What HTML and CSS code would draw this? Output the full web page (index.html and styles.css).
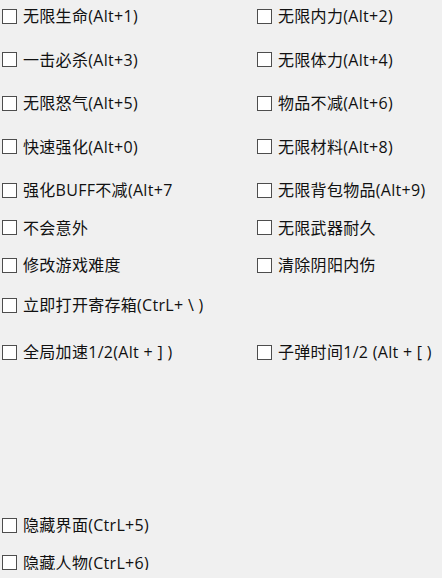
FILE: index.html
```html
<!DOCTYPE html>
<html lang="zh-CN">
<head>
    <meta charset="UTF-8">
    <meta name="viewport" content="width=device-width, initial-scale=1.0">
    <title>修改器</title>

    <link rel="stylesheet" href="styles.css">
</head>
<body>
    <form class="panel">
        <div class="row">
            <label class="option"><input type="checkbox"><span>无限生命(Alt+1)</span></label>
            <label class="option"><input type="checkbox"><span>无限内力(Alt+2)</span></label>
        </div>
        <div class="row">
            <label class="option"><input type="checkbox"><span>一击必杀(Alt+3)</span></label>
            <label class="option"><input type="checkbox"><span>无限体力(Alt+4)</span></label>
        </div>
        <div class="row">
            <label class="option"><input type="checkbox"><span>无限怒气(Alt+5)</span></label>
            <label class="option"><input type="checkbox"><span>物品不减(Alt+6)</span></label>
        </div>
        <div class="row">
            <label class="option"><input type="checkbox"><span>快速强化(Alt+0)</span></label>
            <label class="option"><input type="checkbox"><span>无限材料(Alt+8)</span></label>
        </div>
        <div class="row">
            <label class="option"><input type="checkbox"><span>强化BUFF不减(Alt+7</span></label>
            <label class="option"><input type="checkbox"><span>无限背包物品(Alt+9)</span></label>
        </div>
        <div class="row gap-s">
            <label class="option"><input type="checkbox"><span>不会意外</span></label>
            <label class="option"><input type="checkbox"><span>无限武器耐久</span></label>
        </div>
        <div class="row gap-s">
            <label class="option"><input type="checkbox"><span>修改游戏难度</span></label>
            <label class="option"><input type="checkbox"><span>清除阴阳内伤</span></label>
        </div>
        <div class="row gap-m">
            <label class="option"><input type="checkbox"><span>立即打开寄存箱(CtrL+ \ )</span></label>
        </div>
        <div class="row gap-l">
            <label class="option"><input type="checkbox"><span>全局加速1/2(Alt + ] )</span></label>
            <label class="option"><input type="checkbox"><span>子弹时间1/2 (Alt + [ )</span></label>
        </div>

        <!-- hotkeys for the window -->
        <div class="row gap-xl">
            <label class="option"><input type="checkbox"><span>隐藏界面(CtrL+5)</span></label>
        </div>
        <div class="row gap-s">
            <label class="option"><input type="checkbox"><span>隐藏人物(CtrL+6)</span></label>
        </div>
    </form>
</body>
</html>
```

FILE: styles.css
```css
body{
    margin: 0;
    background-color: #f0f0f0;
    color: #111;
    font-family: "Open Sans", "Noto Sans CJK SC", sans-serif;
    font-size: 16px;
}
.panel{
    padding: 8px 0 0 2px;
}
.row{
    display: grid;
    grid-template-columns: 255px auto;
    height: 15px;
    align-items: center;
}
.row + .row{
    margin-top: 28.5px;
}
.row.gap-s{
    margin-top: 22.5px;
}
.row.gap-m{
    margin-top: 25px;
}
.row.gap-l{
    margin-top: 32px;
}
.row.gap-xl{
    margin-top: 158px;
}
.option{
    display: flex;
    align-items: center;
    gap: 6px;
    white-space: nowrap;
    line-height: 15px;
    letter-spacing: 0.3px;
}
.option span{
    padding-top: 1px;
}
.option input{
    appearance: none;
    margin: 0;
    width: 15px;
    height: 15px;
    border: 1px solid #4d4d4d;
    background-color: #fff;
    flex: none;
}
```
